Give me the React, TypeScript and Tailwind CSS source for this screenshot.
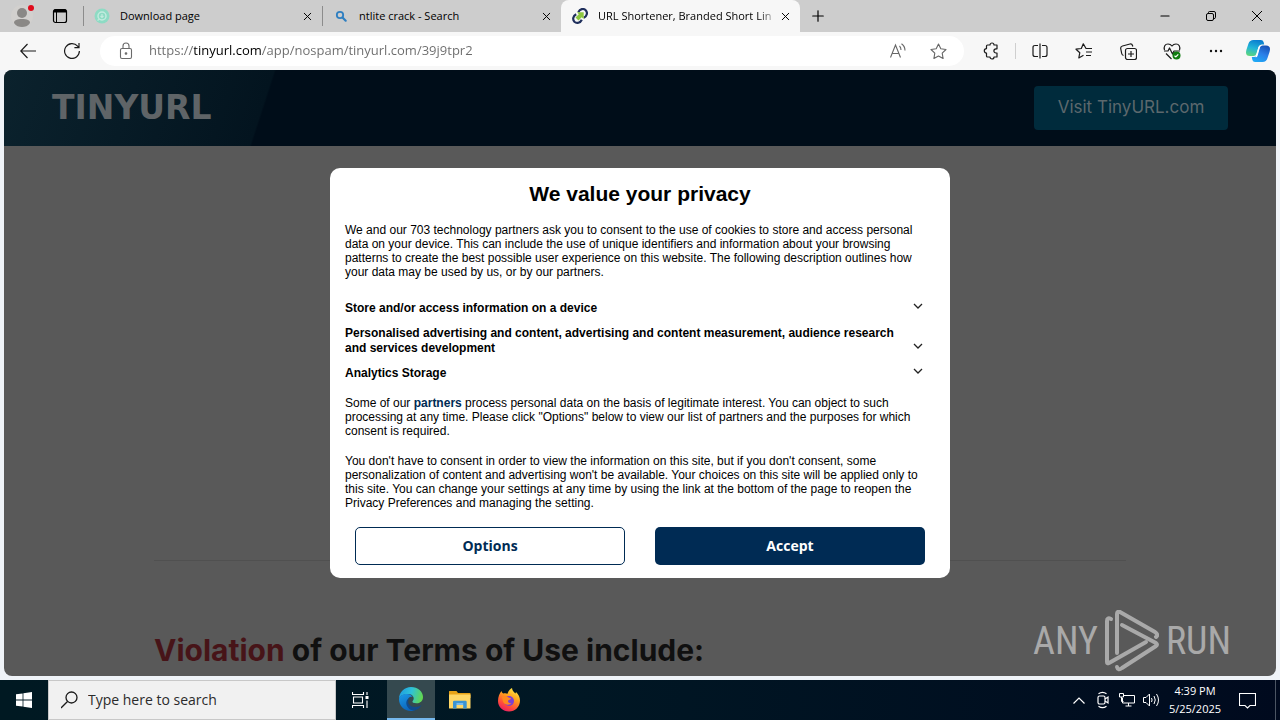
import { ReactNode, useState } from "react";
import { Minus, Plus, X } from "lucide-react";

const tabs = [
    { id: 1, title: "Download page", icon: <DownloadFavicon /> },
    { id: 2, title: "ntlite crack - Search", icon: <SearchFavicon /> },
    { id: 3, title: "URL Shortener, Branded Short Lin", icon: <TinyFavicon /> },
];

const purposes = [
    "Store and/or access information on a device",
    "Personalised advertising and content, advertising and content measurement, audience research and services development",
    "Analytics Storage",
];

function DownloadFavicon() {
    return (
        <svg width="16" height="16" viewBox="0 0 16 16" fill="none">
            <circle cx="8" cy="8" r="7.5" fill="#8edbc4" />
            <circle cx="8" cy="8" r="4" stroke="#c3ebdf" strokeWidth="1.5" />
            <path d="M8 6v3M6.5 8 8 9.5 9.5 8" stroke="#c3ebdf" strokeWidth="1.2" />
            <path d="M3.5 12.5 5.5 11" stroke="#c3ebdf" strokeWidth="1.2" />
        </svg>
    );
}

function SearchFavicon() {
    return (
        <svg width="16" height="16" viewBox="0 0 16 16" fill="none" stroke="#2f7fc1">
            <circle cx="7" cy="7" r="3.2" strokeWidth="1.8" />
            <path d="m9.5 9.5 3.2 3.2" strokeWidth="2.2" strokeLinecap="round" />
        </svg>
    );
}

function TinyFavicon() {
    return (
        <svg width="16" height="16" viewBox="0 0 16 16" fill="none">
            <path d="M6.3 4.2C8 1 11.5 0 13.7 2.2c2.2 2.3 1.3 6-1.9 7.6" stroke="#1f2f5c" strokeWidth="2.2" />
            <path d="M4.2 6.2C1 7.8.3 11.5 2.4 13.7c2.2 2.1 6 1.2 7.4-1.9" stroke="#1f2f5c" strokeWidth="2.2" />
            <path d="M5 4.300h6.700V11L9.700 9.200l-3.200 3.300-3-3L6.800 6.300z" fill="#8cc63f" />
        </svg>
    );
}

function IconButton({ label, className = "", children }: { label: string; className?: string; children: ReactNode }) {
    return (
        <button aria-label={label} className={`flex items-center justify-center shrink-0 ${className}`}>
            {children}
        </button>
    );
}

function TabStrip() {
    const [active, setActive] = useState(3);

    return (
        <div className="flex h-8 bg-[#cdcdcd] text-black">
            <IconButton label="Profile" className="w-11">
                <svg width="24" height="24" viewBox="0 0 24 24">
                    <circle cx="12" cy="12" r="11" fill="#d2d0ce" />
                    <circle cx="12" cy="9" r="5" fill="#8a8886" />
                    <path d="M4 19c0-3 3-4 8-4s8 1 8 4c-2 3-5 4-8 4s-6-1-8-4z" fill="#8a8886" />
                    <circle cx="21" cy="4" r="3" fill="#e00b1c" />
                </svg>
            </IconButton>
            <IconButton label="Tab actions" className="w-8">
                <svg width="16" height="16" viewBox="0 0 16 16" fill="none" stroke="#000">
                    <rect x="1.500" y="1.500" width="13" height="13" rx="2" strokeWidth="1.200" />
                    <path d="M2 3h12" strokeWidth="3" />
                    <path d="M4.500 4v10" />
                </svg>
            </IconButton>
            <div className="flex min-w-0 ml-[7px]">
                {tabs.map((tab) => (
                    <div
                        key={tab.id}
                        className={`flex items-center w-[239px] min-w-0 pl-[11px] pr-[7px] ${active == tab.id ? "bg-[#f7f7f7] rounded-t-lg" : "relative before:absolute before:left-0 before:top-1.5 before:h-5 before:w-px before:bg-[#8c8c8c]"}`}
                    >
                        <button onClick={() => setActive(tab.id)} className="flex items-center flex-1 min-w-0 gap-2.5">
                            <span className="shrink-0">{tab.icon}</span>
                            <span
                                className={`overflow-hidden whitespace-nowrap text-[11px] leading-4 text-left flex-1 ${tab.title.length > 30 ? "mask-r-from-90%" : ""}`}
                            >
                                {tab.title}
                            </span>
                        </button>
                        <IconButton label={`Close ${tab.title}`} className="w-4">
                            <X size={13} strokeWidth={1.8} />
                        </IconButton>
                    </div>
                ))}
            </div>
            <IconButton label="New tab" className="w-9">
                <Plus size={18} strokeWidth={1.6} />
            </IconButton>
            <div className="flex ml-auto">
                <IconButton label="Minimize" className="w-[46px]">
                    <Minus size={14} strokeWidth={1.8} />
                </IconButton>
                <IconButton label="Restore" className="w-[46px]">
                    <svg width="10" height="10" viewBox="0 0 10 10" fill="none" stroke="#000">
                        <rect x=".5" y="2.500" width="7" height="7" rx="1.500" />
                        <path d="M2.500 2V1.500q0-1 1-1H8Q9.500.5 9.500 2v4.500q0 1-1.500 1" />
                    </svg>
                </IconButton>
                <IconButton label="Close window" className="w-[46px]">
                    <svg width="10" height="10" viewBox="0 0 10 10" stroke="#000">
                        <path d="m0 0 10 10M10 0 0 10" />
                    </svg>
                </IconButton>
            </div>
        </div>
    );
}

function Toolbar() {
    return (
        <div className="flex items-center h-[38px] pl-1.5 pr-0.5 bg-[#f7f7f7]">
            <IconButton label="Back" className="w-11 h-8">
                <svg width="16" height="16" viewBox="0 0 16 16" fill="none" stroke="#1b1b1b" strokeWidth="1.2">
                    <path d="M16 8H1M7.500 1 .8 8l6.700 7" />
                </svg>
            </IconButton>
            <IconButton label="Refresh" className="w-11 h-8">
                <svg width="16" height="16" viewBox="0 0 16 16" fill="none" stroke="#1b1b1b" strokeWidth="1.2">
                    <path d="M15.400 8A7.400 7.400 0 1 1 13.600 3.200L14.800 4.500M15 0v4.600h-4.600" />
                </svg>
            </IconButton>
            <div className="flex items-center flex-1 min-w-0 h-[30px] ml-1.5 pl-[18px] pr-1.5 rounded-full bg-white">
                <svg width="16" height="18" viewBox="0 0 16 18" fill="none" stroke="#6a6a6a" strokeWidth="1.1" className="shrink-0">
                    <rect x="2.500" y="6.500" width="11" height="10" rx="1.500" />
                    <path d="M5 6.500V4a3 3 0 0 1 6 0v2.500" />
                    <circle cx="8" cy="11.500" r=".8" fill="#6a6a6a" />
                </svg>
                <input
                    aria-label="Address and search bar"
                    defaultValue="https://tinyurl.com/app/nospam/tinyurl.com/39j9tpr2"
                    className="flex-1 min-w-0 ml-[15px] text-[13px] outline-none text-transparent bg-clip-text bg-[linear-gradient(90deg,#6b6b6b_45px,#000_45px,#000_113px,#6b6b6b_113px)]"
                />
                <IconButton label="Read aloud" className="w-10 h-7">
                    <svg width="16" height="16" viewBox="0 0 16 16" fill="none" stroke="#666" strokeWidth="1.1">
                        <path d="M.5 14.500 5.500 2l5 12.500M2.400 10.500h6.200M9.500 3q1.500 1.500 1.500 4M11.500.8q3.500 2.500 3.500 6.700" />
                    </svg>
                </IconButton>
                <IconButton label="Add to favorites" className="w-10 h-7">
                    <svg width="17" height="17" viewBox="0 0 17 17" fill="none" stroke="#666" strokeWidth="1.1" strokeLinejoin="round">
                        <path d="m8.500 1 2.300 4.800 5.200.7-3.800 3.700.9 5.300-4.600-2.500-4.600 2.500.9-5.300L1 6.500l5.200-.7z" />
                    </svg>
                </IconButton>
            </div>
            <IconButton label="Extensions" className="w-11 h-8 ml-[5px]">
                <svg width="16" height="18" viewBox="0 0 16 18" fill="none" stroke="#1b1b1b" strokeWidth="1.2" strokeLinejoin="round">
                    <path d="M4.500 3H7a2 2 0 0 1 4 0h3v3.800h-1a2 2 0 0 0 0 4.200h1v4h-3a2 2 0 0 1-4 0H4.500q-1 0-1-1v-3a2.200 2.200 0 0 1 0-4.400V4q0-1 1-1z" />
                </svg>
            </IconButton>
            <div className="w-px h-4 mx-0.5 bg-[#cfcfcf]" />
            <IconButton label="Split screen" className="w-11 h-8">
                <svg width="16" height="16" viewBox="0 0 16 16" fill="none" stroke="#1b1b1b" strokeWidth="1.2">
                    <path d="M6 2.500H3Q1 2.500 1 4.500v7q0 2 2 2h3M10 2.500h3q2 0 2 2v7q0 2-2 2h-3M8 .5v15" />
                </svg>
            </IconButton>
            <IconButton label="Favorites" className="w-11 h-8">
                <svg width="18" height="16" viewBox="0 0 18 16" fill="none" stroke="#1b1b1b" strokeWidth="1.2" strokeLinejoin="round">
                    <path d="M17 5.500h-6L8.300.8 6.300 5.500 1 6.200l3.800 3.500-1 5.300 4.700-2.700M11 9h6M11 12.500h5" />
                </svg>
            </IconButton>
            <IconButton label="Collections" className="w-11 h-8">
                <svg width="17" height="17" viewBox="0 0 17 17" fill="none" stroke="#1b1b1b" strokeWidth="1.2" strokeLinejoin="round">
                    <rect x="5.500" y="5.500" width="11" height="11" rx="2" />
                    <path d="M11 8v6M8 11h6M3.500 12.500Q2 12 1.700 10.500L.7 5.500Q.5 3.500 2.500 3L10 1q2-.3 2.500 1.500l.3 1" />
                </svg>
            </IconButton>
            <IconButton label="Browser essentials" className="w-11 h-8">
                <svg width="18" height="17" viewBox="0 0 18 17" fill="none" stroke="#1b1b1b" strokeWidth="1.2" strokeLinejoin="round">
                    <path d="M1.500 7C.5 3.500 2 1 5 1q2.500 0 4 2 1.500-2 4-2c3 0 4.500 2.500 3.500 6M1 8h4l1.500-3 3 6L11 8h6M3 10.500 8.500 16" />
                    <circle cx="13.500" cy="12.500" r="4" fill="#107c10" stroke="none" />
                    <path d="m11.500 12.700 1.300 1.200 2.500-2.600" stroke="#fff" />
                </svg>
            </IconButton>
            <IconButton label="Settings and more" className="w-11 h-8">
                <svg width="14" height="4" viewBox="0 0 14 4" fill="#111">
                    <circle cx="2" cy="2" r="1.200" />
                    <circle cx="7" cy="2" r="1.200" />
                    <circle cx="12" cy="2" r="1.200" />
                </svg>
            </IconButton>
            <IconButton label="Copilot" className="w-10 h-8">
                <svg width="24" height="22" viewBox="0 0 24 22">
                    <defs>
                        <linearGradient id="copilotA" x1="0.5" y1="0" x2="0.2" y2="1">
                            <stop offset="0" stopColor="#0b7fd0" />
                            <stop offset=".5" stopColor="#22b5d8" />
                            <stop offset="1" stopColor="#5fd77a" />
                        </linearGradient>
                        <linearGradient id="copilotB" x1="0.8" y1="0" x2="0.3" y2="1">
                            <stop offset="0" stopColor="#1650b4" />
                            <stop offset=".5" stopColor="#2b7fe8" />
                            <stop offset="1" stopColor="#20a9f5" />
                        </linearGradient>
                    </defs>
                    <path d="M7.500 0H15q2 0 2.600 2l.6 2.500h-2.500q-2.400 0-3.200 2.500l-2 6.500Q9.700 16 7.500 16H4Q0 16 0 12.500q0-1 .5-3l2-6Q3.600 0 7.500 0z" fill="url(#copilotA)" />
                    <path d="M16.500 22H9q-2 0-2.600-2l-.6-3h2.500q2.400 0 3.200-2.500l2-6.500q.8-2.500 3-2.500H20q4 0 4 3.500 0 1-.5 3l-2 6q-1.100 4-5 4z" fill="url(#copilotB)" />
                    <path d="M12.500 7q.8-1.500 2-1.500l-3 10.500q-.6 1.500-2 1.300z" fill="#fff" />
                </svg>
            </IconButton>
        </div>
    );
}

function ConsentDialog() {
    return (
        <div role="dialog" aria-labelledby="consent-title" className="w-full max-w-[620px] rounded-[10px] bg-white text-black text-xs leading-[14px] px-[15px] pt-3 pb-[13px] font-['Liberation_Sans',Arial,sans-serif]">
            <h2 id="consent-title" className="text-center text-[21px] leading-7 font-bold">We value your privacy</h2>
            <p className="mt-[15px]">
                We and our 703 technology partners ask you to consent to the use of cookies to store and access personal data on your device. This can include the use of unique identifiers and information about your browsing patterns to create the best possible user experience on this website. The following description outlines how your data may be used by us, or by our partners.
            </p>
            <ul className="flex flex-col gap-2.5 mt-[22px] pr-[9px]">
                {purposes.map((purpose) => (
                    <li key={purpose}>
                        <button className="flex items-end justify-between w-full text-left font-bold leading-[15px]">
                            <span className="max-w-[552px]">{purpose}</span>
                            <svg width="16" height="15" viewBox="0 0 16 15" fill="none" stroke="#222" strokeWidth="1.3" className="shrink-0">
                                <path d="m4 3 4 4 4-4" />
                            </svg>
                        </button>
                    </li>
                ))}
            </ul>
            <p className="mt-[15px]">
                Some of our <a href="#partners" className="font-bold text-[#002b54]">partners</a> process personal data on the basis of legitimate interest. You can object to such processing at any time. Please click "Options" below to view our list of partners and the purposes for which consent is required.
            </p>
            <p className="mt-4">
                You don't have to consent in order to view the information on this site, but if you don't consent, some personalization of content and advertising won't be available. Your choices on this site will be applied only to this site. You can change your settings at any time by using the link at the bottom of the page to reopen the Privacy Preferences and managing the setting.
            </p>
            <div className="grid grid-cols-2 gap-[30px] px-2.5 mt-[17px] text-sm font-bold font-['Open_Sans',sans-serif]">
                <button className="h-[38px] rounded-[5px] border border-[#002b54] text-[#002b54]">Options</button>
                <button className="h-[38px] rounded-[5px] bg-[#002b54] text-white">Accept</button>
            </div>
        </div>
    );
}

function Watermark() {
    return (
        <div className="absolute bottom-1 right-[45px] flex items-center gap-[7px] text-[#a9a9a9] text-[38px] leading-none font-['Roboto_Condensed','Liberation_Sans_Narrow','DejaVu_Sans_Condensed',sans-serif]">
            <span>ANY</span>
            <svg width="54" height="62" viewBox="0 0 54 62" fill="none" stroke="#a9a9a9" strokeWidth="4" strokeLinecap="round" strokeLinejoin="round">
                <path d="M6 9Q2 7 2 11v41q0 2 2 1l37-21" />
                <path d="M12 43V4q0-3 3-2l35 20q4 3 1 5" />
                <path d="m17 15 34 18q2 1.500 0 3L17 58q-4 3-5-1" />
            </svg>
            <span>RUN</span>
        </div>
    );
}

function TinyUrlPage() {
    return (
        <main className="relative flex-1 min-h-0 mx-1 mb-1 rounded-lg overflow-hidden bg-[#595959] font-[Inter,sans-serif]">
            <header className="flex items-center justify-between h-[76px] px-12 bg-[linear-gradient(108deg,#0b222d_0px,#03141f_257px,#000d19_259px)]">
                <a href="#home" className="text-[33px] leading-9 font-bold text-[#5f6467] font-['DejaVu_Sans',sans-serif]">TINYURL</a>
                <a href="#visit" className="flex items-center justify-center w-[194px] h-11 rounded-sm bg-[#002b3c] text-[#5c686d] text-[17px]">Visit TinyURL.com</a>
            </header>
            <div className="max-w-[972px] mx-auto pt-[414px]">
                <hr className="border-[#505050]" />
                <h1 className="mt-[71px] text-[30px] leading-9 font-bold text-[#101010]">
                    <span className="text-[#471418]">Violation</span> of our Terms of Use include:
                </h1>
            </div>
            <div className="absolute inset-0 flex items-center justify-center">
                <ConsentDialog />
            </div>
            <Watermark />
        </main>
    );
}

function Taskbar() {
    return (
        <footer className="flex h-10 text-white bg-[linear-gradient(90deg,#001922,#001724_45%,#000a1e)]">
            <IconButton label="Start" className="w-12">
                <svg width="16" height="16" viewBox="0 0 16 16" fill="#fff">
                    <path d="M0 2.300 6.600 1.400v6.200H0zM7.400 1.300 16 0v7.600H7.400zM0 8.400h6.600v6.200L0 13.700zM7.400 8.400H16V16l-8.600-1.300z" />
                </svg>
            </IconButton>
            <label className="flex items-center w-72 min-w-0 px-3 gap-2.5 border border-[#c8c8c8] bg-[#f1f1f1]">
                <svg width="17" height="18" viewBox="0 0 17 18" fill="none" stroke="#1a1a1a" strokeWidth="1.3" className="shrink-0">
                    <circle cx="10.500" cy="6.500" r="5.500" />
                    <path d="M6.500 10.500 0 17" />
                </svg>
                <input aria-label="Search" placeholder="Type here to search" className="flex-1 min-w-0 text-sm outline-none placeholder:text-[#2b2b2b]" />
            </label>
            <IconButton label="Task view" className="w-12">
                <svg width="17" height="16" viewBox="0 0 17 16" fill="none" stroke="#fff" strokeWidth="1.1">
                    <path d="M.5 0v2.500h11V0M.5 16v-2.500h11V16M1.500 5h9v6h-9zM15 0v3M15 8.500V16" />
                    <path d="M13.500 4h3v3h-3z" fill="#fff" stroke="none" />
                </svg>
            </IconButton>
            <IconButton label="Microsoft Edge" className="w-12 ml-[3px] bg-[#35494f] border-b-2 border-[#76b9ed]">
                <svg width="24" height="24" viewBox="0 0 24 24">
                    <defs>
                        <linearGradient id="edgeTop" x1="0" y1="0.3" x2="1" y2="0.5">
                            <stop offset="0" stopColor="#1e9de0" />
                            <stop offset=".5" stopColor="#2fc2d8" />
                            <stop offset="1" stopColor="#63d84e" />
                        </linearGradient>
                        <linearGradient id="edgeLeft" x1="0" y1="0" x2="0.5" y2="1">
                            <stop offset="0" stopColor="#1b9ae8" />
                            <stop offset="1" stopColor="#0b63b8" />
                        </linearGradient>
                    </defs>
                    <path d="M0 12C0 5 5.500 0 12 0c7 0 12 4.600 12 10 0 4-3 6.300-6.500 6.300-3 0-4.500-1-4-2 .9-1 1.200-2 1.200-3C14.500 8.500 12 7 8.500 7 4 7 .5 9.500 0 12z" fill="url(#edgeTop)" />
                    <path d="M0 12C.5 9 3.800 7 8 7c3 0 5 1.500 5.800 3-3-1-5.300 1.300-5.300 4.500 0 5 5 9 9 7.500-2 1.400-3.800 2-5.500 2C5 24 0 18.600 0 12z" fill="url(#edgeLeft)" />
                    <path d="M10.300 11.500c-3 4 0 8.500 5.700 8.500 3 0 5-1 6.600-2-1.600 3-4.600 5-7.100 5.400-5 .4-8.500-4.400-8.200-8 .2-2.200 1.300-3.500 3-3.900z" fill="#114a8b" />
                </svg>
            </IconButton>
            <IconButton label="File Explorer" className="w-12 ml-px">
                <svg width="22" height="20" viewBox="0 0 22 20">
                    <path d="M0 1.500Q0 1 .5 1h7L9 3h12q.5 0 .5.500V8H0z" fill="#e8a317" />
                    <path d="M0 4.500h21.500V18q0 .5-.5.500H.5Q0 18.500 0 18z" fill="#ffd766" />
                    <path d="M4 18.500V12q0-1.200 1.200-1.200h11.300q1.200 0 1.200 1.200v6.500h-3.500V15H7.500v3.500z" fill="#3b94d3" />
                    <path d="M7.500 13h6.700v2H7.500z" fill="#75baf0" />
                </svg>
            </IconButton>
            <IconButton label="Firefox" className="w-12 ml-px">
                <svg width="24" height="24" viewBox="0 0 24 24">
                    <defs>
                        <linearGradient id="foxBody" x1="0.8" y1="0" x2="0.3" y2="1">
                            <stop offset="0" stopColor="#fff04a" />
                            <stop offset=".4" stopColor="#ffa01c" />
                            <stop offset=".75" stopColor="#ff4a3c" />
                            <stop offset="1" stopColor="#e91e63" />
                        </linearGradient>
                    </defs>
                    <path d="M4.500 3c.2 1.200.8 2 1.700 2.600C8 5 9 5.200 10.500 5.700 11.300 3 13 1.200 15 0c.3 3 2 4 3.500 5.500L19 4c2.700 2.500 4 5.500 4 8.500C23 19 18 23.500 12 23.500S1 19 1 13c0-4.500 1.500-7.500 3.500-10z" fill="url(#foxBody)" />
                    <circle cx="12" cy="13" r="5" fill="#7b3fd6" />
                    <path d="M5 9c2-1.500 5-1 6.500.5l2.500.7c-.3 1.500-2.500 1.700-3 2.500-.3 1.800 1.500 3 3.500 2.300-1.500 2.500-7 2.500-8.500-1.500z" fill="#ff8a1e" />
                </svg>
            </IconButton>
            <div className="flex ml-auto">
                <IconButton label="Show hidden icons" className="w-6">
                    <svg width="12" height="7" viewBox="0 0 12 7" fill="none" stroke="#fff" strokeWidth="1.2">
                        <path d="m.5 6.500 5.500-5.500 5.500 5.500" />
                    </svg>
                </IconButton>
                <IconButton label="Meet now" className="w-6">
                    <svg width="14" height="18" viewBox="0 0 14 18" fill="none" stroke="#fff" strokeWidth="1.200">
                        <rect x="2" y="5" width="7" height="8" rx="1.500" />
                        <path d="M9 8l3-2v6l-3-2M2.500 2.800q4-2.800 8 0M2.500 15.200q4 2.800 8 0" />
                    </svg>
                </IconButton>
                <IconButton label="Network" className="w-6">
                    <svg width="16" height="14" viewBox="0 0 16 14" fill="none" stroke="#fff">
                        <path d="M5 2.500h10.500v7.500h-12V5M9.500 10v3M6.500 13h6" />
                        <path d="M.5.500h4v3.500h-4zM2.500 4v4.500h2" />
                    </svg>
                </IconButton>
                <IconButton label="Volume" className="w-6">
                    <svg width="17" height="14" viewBox="0 0 17 14" fill="none" stroke="#fff">
                        <path d="M.5 4.500h2.500l3.500-3.500v12L3 9.500H.5zM8.500 5q1.200 2 0 4M11 3q2.500 4 0 8M13.500 1q4 6 0 12" />
                    </svg>
                </IconButton>
                <button className="flex flex-col items-center justify-center w-16 text-[11px] leading-[18px]">
                    <span>4:39 PM</span>
                    <span>5/25/2025</span>
                </button>
                <IconButton label="Notifications" className="w-10">
                    <svg width="17" height="17" viewBox="0 0 17 17" fill="none" stroke="#fff" strokeWidth="1.1">
                        <path d="M.5 1.500h16v12h-5.500L8.500 16 6 13.500H.5z" />
                    </svg>
                </IconButton>
                <button aria-label="Show desktop" className="w-[5px] ml-2 border-l border-[#4b5563]" />
            </div>
        </footer>
    );
}

export default function App() {
    return (
        <div className="flex flex-col h-screen overflow-hidden bg-[#eff3f8] font-['Open_Sans','Noto_Sans',sans-serif]">
            <TabStrip />
            <Toolbar />
            <TinyUrlPage />
            <Taskbar />
        </div>
    );
}
